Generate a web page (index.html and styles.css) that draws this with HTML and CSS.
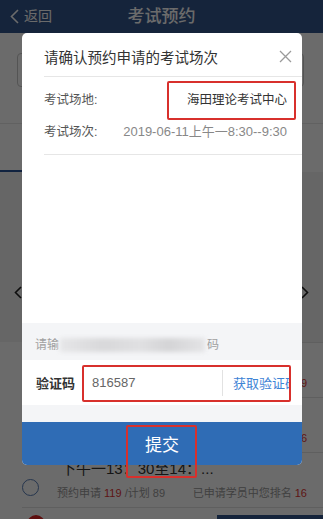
FILE: index.html
```html
<!DOCTYPE html>
<html lang="zh-CN">
<head>
<meta charset="utf-8">
<title>考试预约</title>
<link rel="stylesheet" href="styles.css">
</head>
<body>
<div class="page">
  <header class="topbar">
    <span class="back">
      <svg class="back-icon" width="9" height="15" viewBox="0 0 9 15"><path d="M8 1 L1.5 7.5 L8 14" fill="none" stroke="#fff" stroke-width="1.6"/></svg>
      <span>返回</span>
    </span>
    <h1 class="title">考试预约</h1>
    <span></span>
  </header>

  <section class="search">
    <div class="search-box"></div>
  </section>

  <nav class="tabs">
    <span class="tab tab-active"></span>
    <span class="tab"></span>
    <span class="tab"></span>
  </nav>

  <section class="dates">
    <svg class="arrow" width="8" height="13" viewBox="0 0 8 13"><path d="M7 1 L1.5 6.5 L7 12" fill="none" stroke="#222" stroke-width="1.6"/></svg>
    <svg class="arrow" width="8" height="13" viewBox="0 0 8 13"><path d="M1 1 L6.5 6.5 L1 12" fill="none" stroke="#222" stroke-width="1.6"/></svg>
  </section>

  <ul class="list">
    <li class="item">
      <span class="radio"></span>
      <div class="item-body">
        <div class="item-title">上午一08：30至09：30</div>
        <div class="item-stats"><span>预约申请 <b>98</b> /计划 89</span><span>已申请学员中您排名 <b>9</b></span></div>
      </div>
    </li>
    <li class="item">
      <span class="radio"></span>
      <div class="item-body">
        <div class="item-title">上午一10：00至11：00</div>
        <div class="item-stats"><span>预约申请 <b>105</b> /计划 89</span><span>已申请学员中您排名 <b>6</b></span></div>
      </div>
    </li>
    <li class="item">
      <span class="radio"></span>
      <div class="item-body">
        <div class="item-title">下午一13：30至14：...</div>
        <div class="item-stats"><span>预约申请 <b>119</b> /计划 89</span><span>已申请学员中您排名 <b>16</b></span></div>
      </div>
    </li>
    <li class="item">
      <span class="radio radio-on"></span>
      <div class="item-body"></div>
    </li>
  </ul>

  <div class="footer-bar"></div>
</div>

<div class="mask"></div>

<div class="dialog">
  <div class="dlg-head">
    <span class="dlg-title">请确认预约申请的考试场次</span>
    <svg class="close" width="13" height="13" viewBox="0 0 13 13"><path d="M1 1 L12 12 M12 1 L1 12" stroke="#9a9a9a" stroke-width="1.3" fill="none"/></svg>
  </div>

  <div class="info">
    <div class="info-row">
      <span class="info-label">考试场地:</span>
      <span class="info-value info-strong">海田理论考试中心</span>
    </div>
    <div class="info-row">
      <span class="info-label">考试场次:</span>
      <span class="info-value">2019-06-11上午一8:30--9:30</span>
    </div>
  </div>

  <div class="dlg-space"></div>

  <div class="verify">
    <div class="hint">请输<span class="blur"></span>码</div>
    <div class="code-row">
      <span class="code-label">验证码</span>
      <span class="code-input">816587</span>
      <span class="code-sep"></span>
      <span class="code-link">获取验证码</span>
    </div>
  </div>

  <div class="submit">提交</div>

  <span class="mark mark-place"></span>
  <span class="mark mark-code"></span>
  <span class="mark mark-submit"></span>
</div>
</body>
</html>
```

FILE: styles.css
```css
* {
  box-sizing: border-box;
  margin: 0;
  padding: 0;
}

html, body {
  width: 323px;
  height: 519px;
  overflow: hidden;
}

body {
  position: relative;
  font-family: "Liberation Sans", "Noto Sans CJK SC", sans-serif;
  background: #f2f2f2;
  color: #333;
}

.page {
  position: relative;
  height: 519px;
  overflow: hidden;
}

/* header */
.topbar {
  height: 33px;
  background: #34568c;
  color: #fff;
  display: grid;
  grid-template-columns: 1fr auto 1fr;
  align-items: center;
}

.back {
  display: flex;
  align-items: center;
  gap: 5px;
  padding-left: 10px;
  font-size: 14px;
  line-height: 33px;
}

.title {
  font-size: 17px;
  font-weight: 500;
  line-height: 33px;
}

/* search area */
.search {
  background: #fff;
  padding: 20px 19px 36px 17px;
}

.search-box {
  height: 34px;
  border: 1px solid #c8c8c8;
  border-radius: 4px;
}

.tabs {
  height: 49px;
  background: #fff;
  border-top: 1px solid #e6e6e6;
  display: flex;
  align-items: flex-end;
}

.tab {
  flex: 1;
  height: 2px;
}

.tab-active {
  background: #2a5599;
}

.dates {
  height: 170px;
  padding: 114px 14px 0 14px;
  display: flex;
  justify-content: space-between;
  align-items: flex-start;
}

/* list */
.list {
  list-style: none;
  background: #fff;
}

.item {
  height: 55px;
  border-top: 1px solid #e2e2e2;
  margin-left: 22px;
  display: flex;
  align-items: flex-start;
}

.radio {
  width: 17px;
  height: 17px;
  border-radius: 50%;
  border: 1px solid #5a7fb8;
  margin-top: 26px;
  flex: none;
}

.radio-on {
  margin-top: 7px;
  margin-left: 5px;
  width: 18px;
  height: 18px;
  border: none;
  background: #e02424;
}

.item-body {
  flex: 1;
  padding: 7px 16px 0 18px;
}

.item-title {
  font-size: 15px;
  line-height: 18px;
  color: #333;
  padding-left: 4px;
}

.item-stats {
  margin-top: 8px;
  display: flex;
  justify-content: space-between;
  font-size: 11px;
  line-height: 14px;
  color: #999;
}

.item-stats b {
  font-weight: 400;
  color: #e03434;
}

.footer-bar {
  position: absolute;
  right: 0;
  bottom: -40px;
  width: 106px;
  height: 44px;
  background: #34568c;
}

/* mask */
.mask {
  position: absolute;
  inset: 0;
  background: rgba(0, 0, 0, 0.58);
}

/* dialog */
.dialog {
  position: absolute;
  left: 22px;
  top: 33px;
  width: 280px;
  height: 432px;
  background: #fff;
  border-radius: 5px;
  display: flex;
  flex-direction: column;
}

.dlg-head {
  height: 44px;
  margin-left: 22px;
  padding-right: 10px;
  border-bottom: 1px solid #e6e6e6;
  display: flex;
  align-items: center;
  justify-content: space-between;
  padding-top: 3px;
}

.dlg-title {
  font-size: 14.5px;
  color: #333;
}

.info {
  margin-left: 22px;
  padding: 7px 15px 6px 0;
  border-bottom: 1px solid #e6e6e6;
}

.info-row {
  display: flex;
  justify-content: space-between;
  line-height: 32px;
  font-size: 12.5px;
}

.info-label {
  color: #555;
}

.info-value {
  color: #888;
  font-size: 13px;
}

.info-strong {
  color: #333;
  font-size: 12.5px;
}

.dlg-space {
  flex: 1;
}

.verify {
  background: #f4f5f7;
  padding: 14px 0 17px;
}

.hint {
  padding-left: 13px;
  font-size: 12px;
  line-height: 16px;
  color: #a0a0a0;
  margin-bottom: 7px;
  display: flex;
  align-items: center;
}

.blur {
  display: inline-block;
  width: 145px;
  height: 14px;
  margin: 0 2px 0 1px;
  background: linear-gradient(90deg, #e6e6e8 0%, #d8d8da 30%, #e0e0e2 55%, #d4d4d6 75%, #e4e4e6 100%);
  filter: blur(2px);
}

.code-row {
  height: 45px;
  background: #fff;
  padding-left: 14px;
  display: flex;
  align-items: center;
}

.code-label {
  width: 56px;
  font-size: 13px;
  font-weight: 600;
  color: #333;
}

.code-input {
  width: 130px;
  font-size: 13px;
  color: #666;
}

.code-sep {
  width: 1px;
  height: 26px;
  background: #e2e2e2;
}

.code-link {
  margin-left: 10px;
  width: 57px;
  overflow: hidden;
  white-space: nowrap;
  font-size: 13px;
  color: #3f84d6;
}

.submit {
  height: 43px;
  background: #2f6cb5;
  color: #fff;
  font-size: 17px;
  border-radius: 0 0 5px 5px;
  display: flex;
  align-items: center;
  justify-content: center;
}

/* annotation boxes */
.mark {
  position: absolute;
  border: 2px solid #d8302c;
  border-radius: 2px;
}

.mark-place {
  left: 145px;
  top: 48px;
  width: 129px;
  height: 39px;
}

.mark-code {
  left: 60px;
  top: 332px;
  width: 209px;
  height: 37px;
}

.mark-submit {
  left: 104px;
  top: 392px;
  width: 71px;
  height: 53px;
}
```
